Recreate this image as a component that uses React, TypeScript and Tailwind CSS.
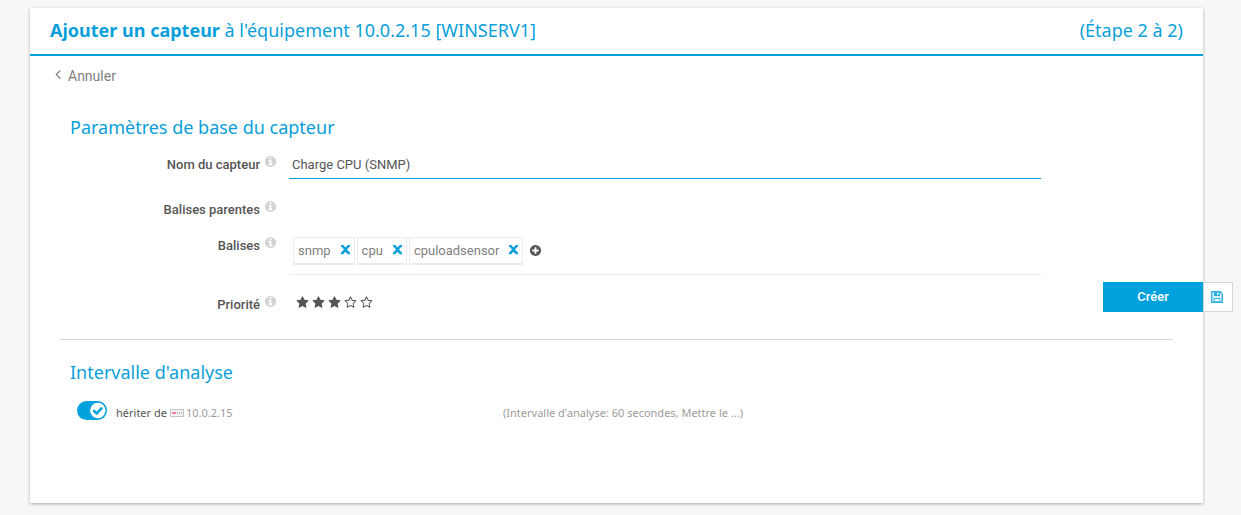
import { useState, type ReactNode } from "react";

const ICONS = {
  angleLeft:
    "M1203 544q0 13-10 23l-393 393 393 393q10 10 10 23t-10 23l-50 50q-10 10-23 10t-23-10l-466-466q-10-10-10-23t10-23l466-466q10-10 23-10t23 10l50 50q10 10 10 23z",
  info:
    "M1152 1376v-160q0-14-9-23t-23-9h-96v-512q0-14-9-23t-23-9h-320q-14 0-23 9t-9 23v160q0 14 9 23t23 9h96v320h-96q-14 0-23 9t-9 23v160q0 14 9 23t23 9h448q14 0 23-9t9-23zm-128-896v-160q0-14-9-23t-23-9h-192q-14 0-23 9t-9 23v160q0 14 9 23t23 9h192q14 0 23-9t9-23zm640 416q0 209-103 385.5t-279.5 279.5-385.5 103-385.5-103-279.5-279.5-103-385.5 103-385.5 279.5-279.5 385.5-103 385.5 103 279.5 279.5 103 385.5z",
  times:
    "M250 260h330l316 350 316-350h330v150l-440 490 440 490v150h-330l-316-350-316 350h-330v-150l440-490-440-490z",
  plus:
    "M1344 960v-128q0-26-19-45t-45-19h-256v-256q0-26-19-45t-45-19h-128q-26 0-45 19t-19 45v256h-256q-26 0-45 19t-19 45v128q0 26 19 45t45 19h256v256q0 26 19 45t45 19h128q26 0 45-19t19-45v-256h256q26 0 45-19t19-45zm320-64q0 209-103 385.5t-279.5 279.5-385.5 103-385.5-103-279.5-279.5-103-385.5 103-385.5 279.5-279.5 385.5-103 385.5 103 279.5 279.5 103 385.5z",
  star:
    "M1728 647q0 22-26 48l-363 354 86 500q1 7 1 20 0 21-10.5 35.5t-30.5 14.5q-19 0-40-12l-449-236-449 236q-22 12-40 12-21 0-31.5-14.5t-10.5-35.5q0-6 2-20l86-500-364-354q-25-27-25-48 0-37 56-46l502-73 225-455q19-41 49-41t49 41l225 455 502 73q56 9 56 46z",
  starOutline:
    "M1201 1004l306-297-422-62-189-382-189 382-422 62 306 297-73 421 378-199 377 199zm527-357q0 22-26 48l-363 354 86 500q1 7 1 20 0 50-41 50-19 0-40-12l-449-236-449 236q-22 12-40 12-21 0-31.5-14.5t-10.5-35.5q0-6 2-20l86-500-364-354q-25-27-25-48 0-37 56-46l502-73 225-455q19-41 49-41t49 41l225 455 502 73q56 9 56 46z",
};

function Icon({ name, className }: { name: keyof typeof ICONS; className: string }) {
  return (
    <svg viewBox="0 0 1792 1792" fill="currentColor" aria-hidden="true" className={className}>
      <path d={ICONS[name]} />
    </svg>
  );
}

function FieldLabel({ htmlFor, children }: { htmlFor?: string; children: ReactNode }) {
  return (
    <div className="flex justify-end gap-1 font-medium leading-5 text-[#555555]">
      {htmlFor ? <label htmlFor={htmlFor}>{children}</label> : <span>{children}</span>}
      <Icon name="info" className="size-[13px] text-[#d3d3d3]" />
    </div>
  );
}

function SectionTitle({ children }: { children: ReactNode }) {
  return (
    <h2 className="px-[10px] font-['Noto_Sans',sans-serif] text-lg leading-6 text-[#0a9fda]">{children}</h2>
  );
}

export default function App() {
  const [name, setName] = useState("Charge CPU (SNMP)");
  const [tags, setTags] = useState(["snmp", "cpu", "cpuloadsensor"]);
  const [priority, setPriority] = useState(3);
  const [inherit, setInherit] = useState(true);

  return (
    <div className="flex min-h-screen flex-col bg-[#f7f7f7] pt-2 pr-[38px] pb-3 pl-[30px] font-[Roboto,sans-serif] text-[13px] text-[#555555]">
      <main className="relative flex-1 bg-white shadow-[0_1px_3px_rgba(0,0,0,0.3)]">
        <header className="flex h-12 items-center justify-between border-b-2 border-[#00a2dd] px-5 pb-[2px] font-['Noto_Sans',sans-serif] text-lg text-[#0a9fda]">
          <h1>
            <strong className="font-bold">Ajouter un capteur</strong> à l'équipement 10.0.2.15 [WINSERV1]
          </h1>
          <span>(Étape 2 à 2)</span>
        </header>

        <div className="px-[30px]">
          <a
            href="#annuler"
            className="-ml-[10px] flex w-fit items-center gap-[2px] pt-[10px] text-sm leading-5 text-[#7f7f7f]"
          >
            <Icon name="angleLeft" className="mb-1 size-4" />
            Annuler
          </a>

          <section className="border-b border-[#d5d5d5] pt-[29px] pb-6">
            <SectionTitle>Paramètres de base du capteur</SectionTitle>
            <div className="grid grid-cols-[217px_minmax(0,1fr)] gap-x-3 pr-[132px]">
              <div className="pt-4">
                <FieldLabel htmlFor="sensor-name">Nom du capteur</FieldLabel>
              </div>
              <input
                id="sensor-name"
                value={name}
                onChange={(e) => setName(e.target.value)}
                className="mt-[11px] h-[29px] w-full border-b border-[#0a9fda] px-[3px] outline-none"
              />

              <div className="pt-[21px]">
                <FieldLabel>Balises parentes</FieldLabel>
              </div>
              <div />

              <div className="pt-4">
                <FieldLabel>Balises</FieldLabel>
              </div>
              <div className="mt-[17px] flex h-[38px] items-start gap-[2px] border-b border-[#ececec] pl-1">
                {tags.map((tag) => (
                  <span
                    key={tag}
                    className="flex h-7 items-center gap-2 border border-b-2 border-[#ececec] pr-[2px] pl-1 text-[#7f7f7f]"
                  >
                    {tag}
                    <button
                      type="button"
                      aria-label={`Supprimer ${tag}`}
                      onClick={() => setTags(tags.filter((t) => t !== tag))}
                      className="pb-[2px] text-[#0a9fda]"
                    >
                      <Icon name="times" className="size-[13px]" />
                    </button>
                  </span>
                ))}
                <button type="button" aria-label="Ajouter une balise" className="ml-1 self-start pt-[7px]">
                  <Icon name="plus" className="size-[13px]" />
                </button>
              </div>

              <div className="pt-5">
                <FieldLabel>Priorité</FieldLabel>
              </div>
              <div className="flex gap-[3px] pt-[21px] pl-[7px]">
                {[1, 2, 3, 4, 5].map((level) => (
                  <button
                    key={level}
                    type="button"
                    aria-label={`Priorité ${level}`}
                    onClick={() => setPriority(level)}
                    className="h-fit"
                  >
                    <Icon name={level <= priority ? "star" : "starOutline"} className="size-[13px]" />
                  </button>
                ))}
              </div>
            </div>
          </section>

          <section className="pt-5">
            <SectionTitle>Intervalle d'analyse</SectionTitle>
            <div className="grid grid-cols-[443px_minmax(0,1fr)] items-center pt-[17px] font-['Noto_Sans',sans-serif] text-[11px] leading-5">
              <div className="flex items-center pl-[17px]">
                <label className="flex cursor-pointer items-center gap-[9px]">
                  <input
                    type="checkbox"
                    checked={inherit}
                    onChange={(e) => setInherit(e.target.checked)}
                    className="peer sr-only"
                  />
                  <svg viewBox="0 0 30 19" aria-hidden="true" className="mb-1 h-[19px] w-[30px]">
                    <rect width="30" height="19" rx="9.5" fill={inherit ? "#00a2dd" : "#b5b5b5"} />
                    <circle cx={inherit ? 20.8 : 9.2} cy="9.5" r="7.7" fill="#fff" />
                    {inherit && <path d="M16.3 9.2l3.3 3.3 5.6-5.9" fill="none" stroke="#00a2dd" strokeWidth="2.6" />}
                  </svg>
                  hériter de
                </label>
                <svg viewBox="0 0 14 8" aria-hidden="true" className="mr-[2px] ml-[3px] h-2 w-[14px]">
                  <rect x=".5" y=".5" width="13" height="7" fill="#f7f3f3" stroke="#c4c4c4" />
                  <path d="M2 3h4v2H2z" fill="#ef7fa6" />
                  <path d="M7 3h1v2H7zM9 3h1v2H9zM11 3h1v2h-1z" fill="#b5b5b5" />
                </svg>
                <span className="text-[#9b9b9b]">10.0.2.15</span>
              </div>
              <p className="text-[#9b9b9b]">(Intervalle d'analyse: 60 secondes, Mettre le ...)</p>
            </div>
          </section>
        </div>

        <div className="absolute top-[274px] -right-[30px] flex h-[30px]">
          <button type="button" className="w-[100px] bg-[#00a2dd] font-medium text-white">
            Créer
          </button>
          <button
            type="button"
            aria-label="Enregistrer"
            className="flex w-[30px] items-center justify-center border border-[#d5d5d5] bg-white pr-[2px]"
          >
            <svg viewBox="0 0 12 12" aria-hidden="true" className="size-3">
              <path d="M.7.7h8.4l2.2 2.2v8.4H.7z" fill="#d9f1fa" stroke="#2aaee0" strokeWidth="1.3" />
              <path d="M3 1h6v4H3z" fill="#2aaee0" />
              <path d="M6 1.5h1.6v2.3H6z" fill="#fff" />
              <path d="M3 7.5h6v3.3H3z" fill="#fff" stroke="#2aaee0" />
            </svg>
          </button>
        </div>
      </main>
    </div>
  );
}
